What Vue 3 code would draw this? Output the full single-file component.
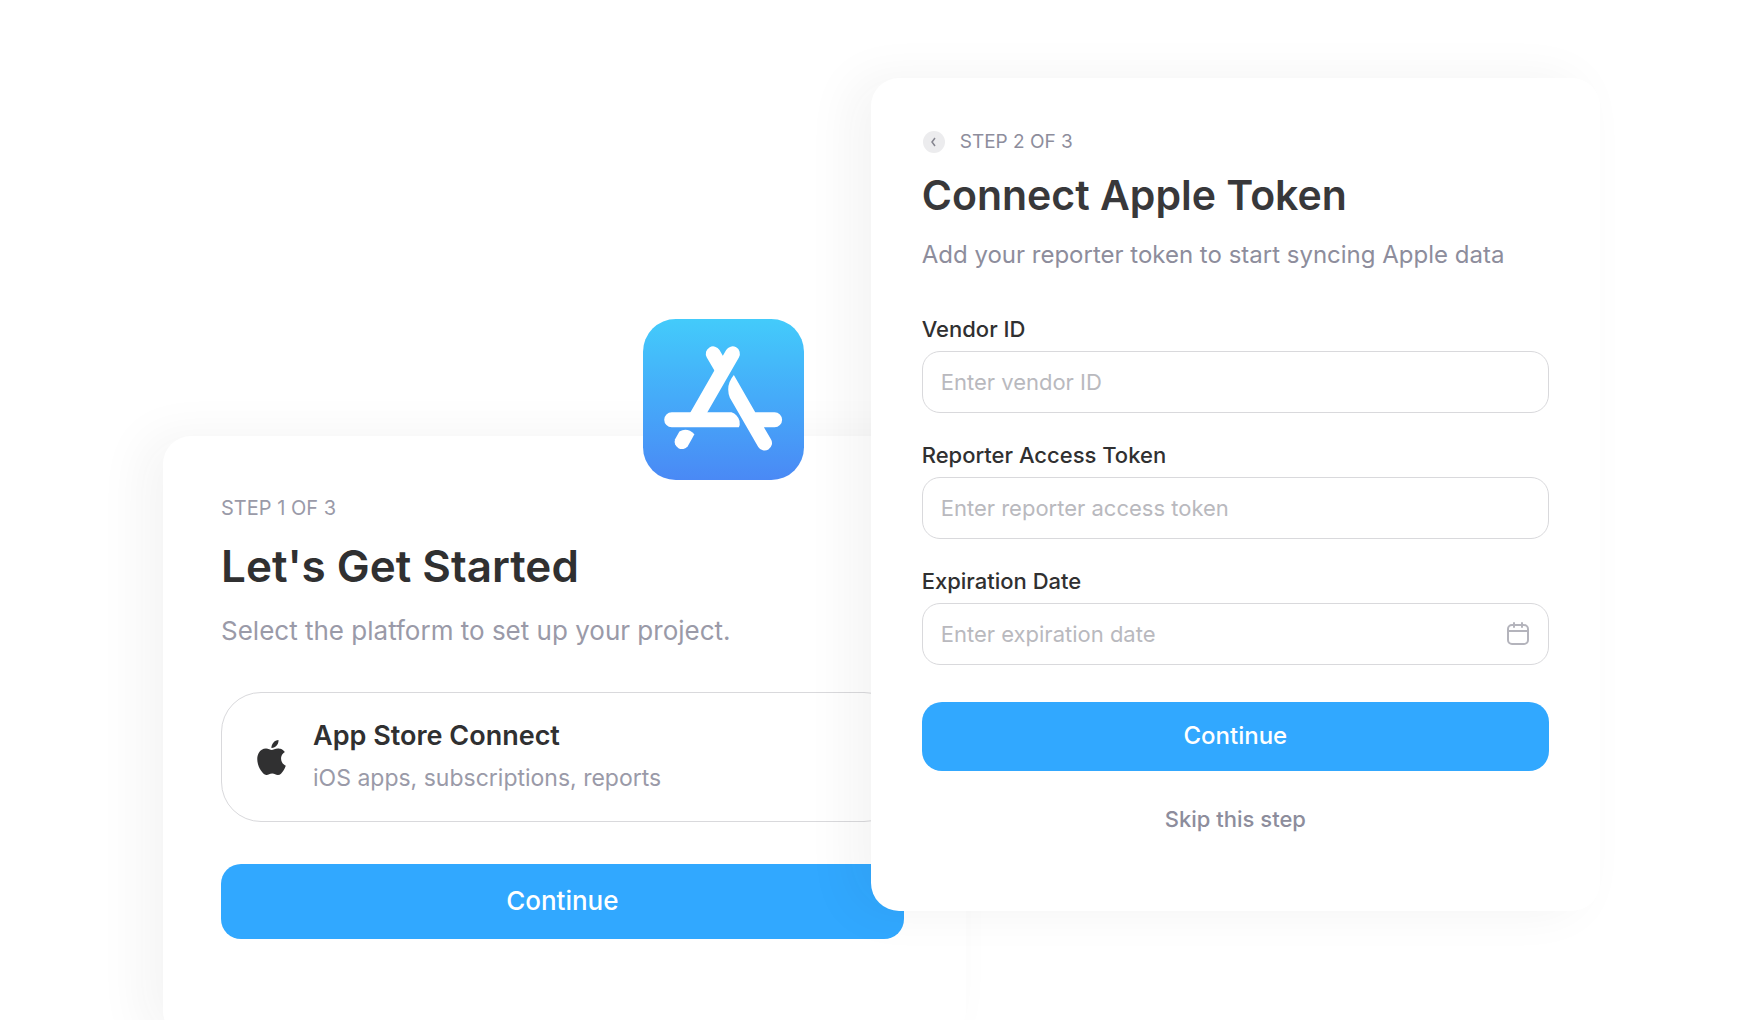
<script setup>
import { ref } from 'vue'

const fields = ref([
    { id: 'vendor', label: 'Vendor ID', placeholder: 'Enter vendor ID', value: '' },
    { id: 'token', label: 'Reporter Access Token', placeholder: 'Enter reporter access token', value: '' },
    { id: 'expiration', label: 'Expiration Date', placeholder: 'Enter expiration date', value: '', calendar: true },
])
</script>

<template>
    <main class="stage">
        <section class="card start">
            <svg class="appIcon" viewBox="69 57 482 482" aria-hidden="true">
                <defs>
                    <linearGradient id="sky" x1="0" y1="0" x2="0" y2="1">
                        <stop offset="0" stop-color="#43cbfb" />
                        <stop offset="0.5" stop-color="#45aaf9" />
                        <stop offset="1" stop-color="#4a89f5" />
                    </linearGradient>
                </defs>
                <rect x="69" y="57" width="482" height="482" rx="98" fill="url(#sky)" />
                <g fill="none" stroke="#fff" stroke-width="44" stroke-linecap="round">
                    <path d="M337 161 L225 356" />
                    <path d="M279 161 L304 204" />
                </g>
                <g fill="#fff">
                    <path d="M155 336 H334 Q352 342 358 362 Q360 374 356 381 H155 A22 22 0 0 1 155 336 Z" />
                    <path d="M165 417 L178 394 Q201 380 223 402 L203 438 A22 22 0 0 1 165 417 Z" />
                    <path d="M341 225 L405 336 H463 A22 22 0 0 1 463 381 H431 L452 417 A22 22 0 0 1 414 440 L329 293 Q315 256 341 225 Z" />
                </g>
            </svg>

            <p class="step">STEP 1 OF 3</p>
            <h1>Let's Get Started</h1>
            <p class="lead">Select the platform to set up your project.</p>

            <button type="button" class="platform">
                <svg class="apple" viewBox="0 0 24 24" aria-hidden="true">
                    <path d="M12.152 6.896c-.948 0-2.415-1.078-3.96-1.04-2.04.027-3.91 1.183-4.961 3.014-2.117 3.675-.546 9.103 1.519 12.09 1.013 1.454 2.208 3.09 3.792 3.039 1.52-.065 2.09-.987 3.935-.987 1.831 0 2.35.987 3.96.948 1.637-.026 2.676-1.48 3.676-2.948 1.156-1.688 1.636-3.325 1.662-3.415-.039-.013-3.182-1.221-3.22-4.857-.026-3.04 2.48-4.494 2.597-4.559-1.429-2.09-3.623-2.324-4.39-2.376-2-.156-3.675 1.09-4.61 1.09zM15.53 3.83c.843-1.012 1.4-2.427 1.245-3.83-1.207.052-2.662.805-3.532 1.818-.78.896-1.454 2.338-1.273 3.714 1.338.104 2.715-.688 3.559-1.701" />
                </svg>
                <span class="platformText">
                    <strong>App Store Connect</strong>
                    <small>iOS apps, subscriptions, reports</small>
                </span>
            </button>

            <button type="button" class="continue">Continue</button>
        </section>

        <form class="card connect" @submit.prevent>
            <div class="stepRow">
                <button type="button" class="back" aria-label="Back">
                    <svg viewBox="0 0 22 22" aria-hidden="true">
                        <path d="M12 7 L9 11 L12 15" />
                    </svg>
                </button>
                <p class="step">STEP 2 OF 3</p>
            </div>
            <h2>Connect Apple Token</h2>
            <p class="lead">Add your reporter token to start syncing Apple data</p>

            <div class="fields">
                <div v-for="field in fields" :key="field.id" class="field">
                    <label :for="field.id">{{ field.label }}</label>
                    <div class="inputBox">
                        <input :id="field.id" v-model="field.value" type="text" :placeholder="field.placeholder">
                        <svg v-if="field.calendar" class="calendar" viewBox="0 0 24 24" aria-hidden="true">
                            <rect x="2" y="3" width="20" height="19" rx="4" />
                            <path d="M2 9 H22 M8 1 V5 M16 1 V5" />
                        </svg>
                    </div>
                </div>
            </div>

            <button type="submit" class="continue">Continue</button>
            <button type="button" class="skip">Skip this step</button>
        </form>
    </main>
</template>

<style>
body {
    margin: 0;
    background-color: #fff;
}
</style>

<style scoped>
.stage {
    box-sizing: border-box;
    height: 100vh;
    padding: 78px 164px 0 163px;
    overflow: hidden;

    display: grid;
    grid-template-columns: 11fr 10fr;
    align-items: start;

    font-family: Inter, "Liberation Sans", sans-serif;
    color: #303031;
}

.card {
    box-sizing: border-box;
    position: relative;
    min-width: 0;

    display: flex;
    flex-direction: column;

    background-color: #fff;
    border-radius: 28px;
    box-shadow: -20px 0 50px rgba(30, 45, 45, 0.05);
}

.start {
    margin: 358px -50px 0 0;
    padding: 60px 62px 100px 58px;
}

.connect {
    margin-left: -45px;
    padding: 52px 51px 76px;
}

h1,
h2,
p {
    margin: 0;
}

h1 {
    margin-top: 18px;
    font-size: 44px;
    line-height: 56px;
    font-weight: 600;
}

h2 {
    margin-top: 15px;
    color: #38383a;
    font-size: 41px;
    line-height: 52px;
    font-weight: 600;
}

.step {
    color: #9a9aa8;
    font-size: 20px;
    line-height: 24px;
}

.lead {
    margin-top: 18px;
    color: #9a9aa8;
    font-size: 24px;
    line-height: 32px;
}

button,
input {
    font-family: inherit;
}

button {
    cursor: pointer;
}

.appIcon {
    position: absolute;
    top: -117px;
    right: 162px;
    width: 161px;
    height: 161px;
}

.platform {
    box-sizing: border-box;
    height: 130px;
    margin-top: 44px;
    padding: 0 32px;

    display: flex;
    align-items: center;
    gap: 24px;

    background-color: #fff;
    border: 1px solid #d9d9dc;
    border-radius: 40px;
    color: inherit;
    text-align: left;
}

.apple {
    width: 35px;
    height: 35px;
    fill: #303031;
}

.platformText {
    display: flex;
    flex-direction: column;
    gap: 8px;
}

.platformText strong {
    font-size: 27px;
    line-height: 34px;
    font-weight: 600;
}

.platformText small {
    color: #9a9aa8;
    font-size: 23px;
    line-height: 34px;
}

.continue {
    height: 69px;
    margin-top: 37px;
    padding: 0 0 2px;

    background-color: #31a8ff;
    border: none;
    border-radius: 20px;
    color: #fff;
    font-size: 24px;
    font-weight: 500;
}

.start .lead {
    margin-top: 20px;
    font-size: 26px;
    line-height: 34px;
}

.start .continue {
    height: 75px;
    margin-top: 42px;
    font-size: 26px;
}

.stepRow {
    display: flex;
    align-items: center;
    gap: 14px;
}

.back {
    width: 24px;
    height: 24px;
    padding: 1px;
    background-color: #ececee;
    background-clip: content-box;
    border: none;
    border-radius: 50%;
}

.back svg {
    display: block;
    width: 22px;
    height: 22px;
    fill: none;
    stroke: #85858f;
    stroke-width: 1.5;
}

.connect .step {
    color: #8d8d9c;
    font-size: 19px;
}

.connect .lead {
    color: #8d8d9c;
}

.fields {
    margin-top: 44px;
    display: flex;
    flex-direction: column;
    gap: 28px;
}

.field {
    display: flex;
    flex-direction: column;
    gap: 8px;
}

.field label {
    font-size: 22px;
    line-height: 28px;
    font-weight: 500;
}

.inputBox {
    box-sizing: border-box;
    height: 62px;
    padding: 0 18px;

    display: flex;
    align-items: center;

    border: 1px solid #d9d9dc;
    border-radius: 18px;
}

.inputBox:focus-within {
    border-color: #31a8ff;
}

.inputBox input {
    flex: 1;
    min-width: 0;
    padding: 0;
    background: none;
    border: none;
    outline: none;
    color: inherit;
    font-size: 22px;
    line-height: 28px;
}

.inputBox input::placeholder {
    color: #b9b9be;
}

.calendar {
    width: 24px;
    height: 24px;
    fill: none;
    stroke: #b4b4bc;
    stroke-width: 2;
    stroke-linecap: round;
}

.skip {
    align-self: center;
    margin-top: 32px;
    padding: 0;
    background: none;
    border: none;
    color: #8d8d9c;
    font-size: 22px;
    line-height: 32px;
    font-weight: 500;
}
</style>
